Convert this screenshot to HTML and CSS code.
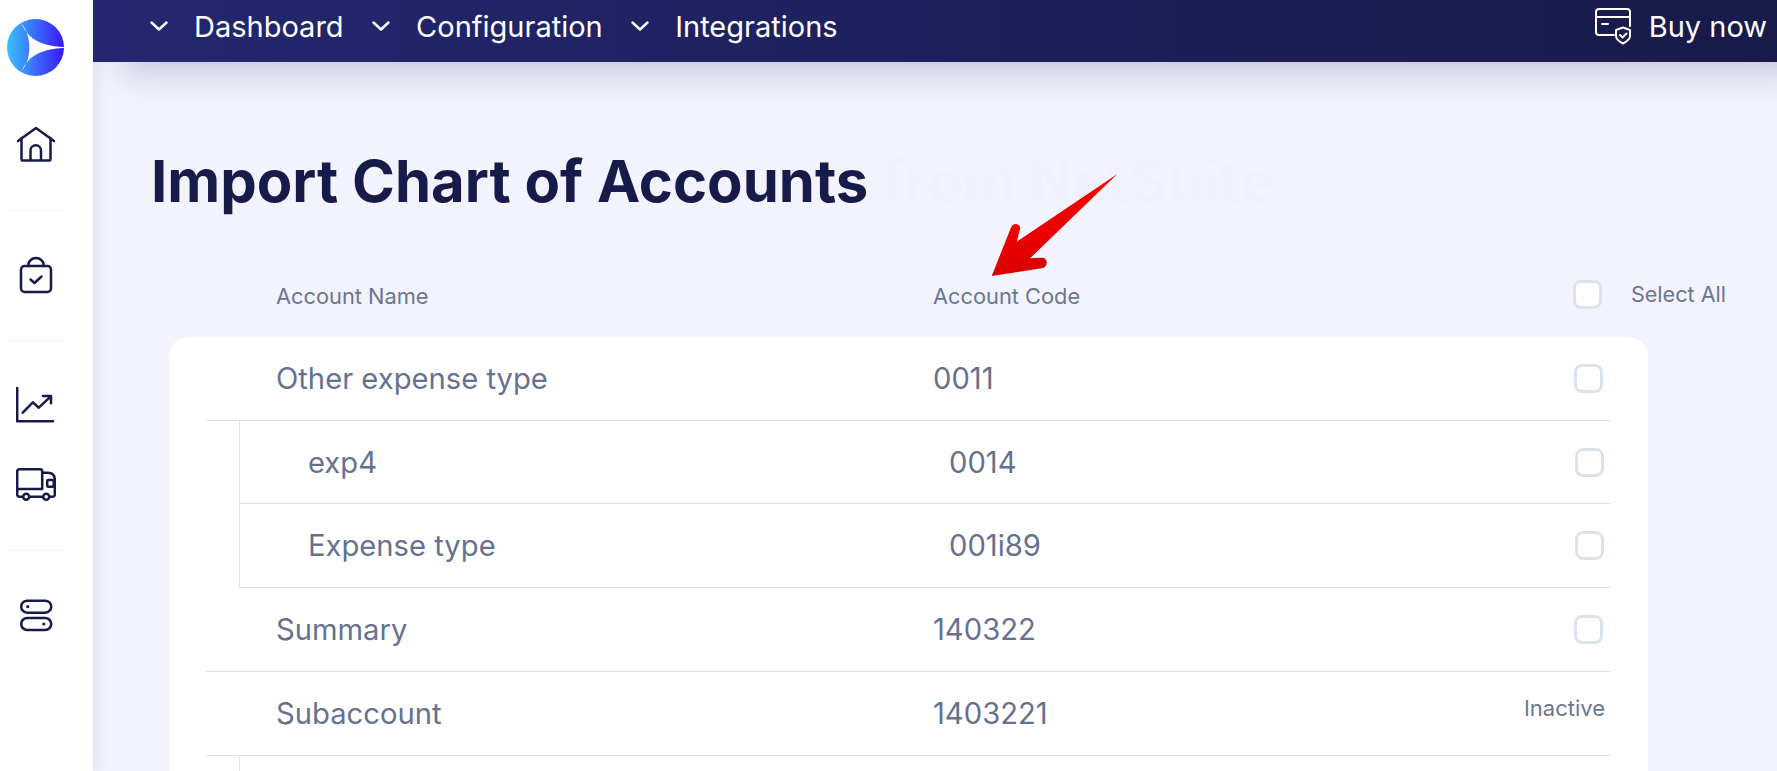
FILE: index.html
```html
<!DOCTYPE html>
<html lang="en">
<head>
  <meta charset="UTF-8">
  <meta name="viewport" content="width=device-width, initial-scale=1.0">
  <title>Import Chart of Accounts</title>
  <link rel="stylesheet" href="styles.css">
</head>
<body>
  <!-- Barra lateral -->
  <aside class="sidebar">
    <div class="logo">
      <svg width="57" height="57" viewBox="0 0 57 57">
        <defs>
          <linearGradient id="logoGrad" x1="0" y1="0" x2="1" y2="0">
            <stop offset="0" stop-color="#3cc0ff"/>
            <stop offset="1" stop-color="#3a17f5"/>
          </linearGradient>
        </defs>
        <circle cx="28.5" cy="28.5" r="28.5" fill="url(#logoGrad)"/>
        <path d="M14.5 4.5C20 17 30 27 57 28V29C30 30 20 40 14.5 52.5C25 40 25 17 14.5 4.5Z" fill="#fff"/>
      </svg>
    </div>
    <div class="side-group">
      <svg class="side-icon" viewBox="0 0 40 40"><path d="M2 16L20 3L38 16M5.5 13V34.5a1 1 0 0 0 1 1H33.5a1 1 0 0 0 1-1V13M14.5 35.5V25.5a5.2 5.2 0 0 1 10.5 0V35.5"/></svg>
    </div>
    <div class="side-group side-group-alt">
      <svg class="side-icon" viewBox="0 0 40 40"><rect x="5" y="10" width="30" height="26" rx="3.5"/><path d="M12.5 10V8.5a7 6 0 0 1 15 0V10M14.5 23.5l4 3.5l7-6.5"/></svg>
    </div>
    <div class="side-group">
      <svg class="side-icon" viewBox="0 0 40 40"><path d="M1.2 3V36.3H37M6.8 27.7L16.8 17.3L22.8 22.7L34.5 11.7M27 11H35V18.3"/></svg>
      <svg class="side-icon side-icon-next" viewBox="0 0 40 40"><path d="M7 31.7H3.2a2 2 0 0 1-2-2V6.3a2 2 0 0 1 2-2H24.2a2 2 0 0 1 2 2V24H1.2M13.4 31.7H27M33.4 31.7H36.8a2 2 0 0 0 2-2V15C38.8 10 36 7.7 32 7.7H26.2"/><rect x="31.2" y="15" width="6.5" height="6.7" rx="1"/><circle cx="10.2" cy="31.7" r="3"/><circle cx="30.2" cy="31.7" r="3"/></svg>
    </div>
    <div class="side-group side-group-last">
      <svg class="side-icon" viewBox="0 0 40 40"><rect x="5.2" y="4.7" width="30" height="12" rx="6"/><rect x="5.2" y="22" width="30" height="12" rx="6"/><circle class="side-dot" cx="11.8" cy="10.7" r="1.6"/><circle class="side-dot" cx="27.8" cy="28" r="1.6"/></svg>
    </div>
  </aside>

  <main class="main">
    <!-- Barra superior -->
    <header class="topbar">
      <nav class="nav">
        <a class="nav-item"><svg class="chevron" viewBox="0 0 18 10"><path d="M1.5 1.5L9 8.5L16.5 1.5"/></svg>Dashboard</a>
        <a class="nav-item"><svg class="chevron" viewBox="0 0 18 10"><path d="M1.5 1.5L9 8.5L16.5 1.5"/></svg>Configuration</a>
        <a class="nav-item"><svg class="chevron" viewBox="0 0 18 10"><path d="M1.5 1.5L9 8.5L16.5 1.5"/></svg>Integrations</a>
      </nav>
      <a class="buy">
        <svg class="buy-icon" viewBox="0 0 40 40"><path d="M20 29H5a3 3 0 0 1-3-3V6a3 3 0 0 1 3-3H33a3 3 0 0 1 3 3V20M2 11H36M8 18H14M29 21.5L36 24V30C36 34 32 36 29 37.5C26 36 22 34 22 30V24ZM26 29l2.5 2.5l4-4"/></svg>
        Buy now
      </a>
    </header>

    <div class="content">
      <h1 class="title">Import Chart of Accounts <span class="title-ghost">from NetSuite</span></h1>

      <div class="table-head">
        <span class="col-name">Account Name</span>
        <span class="col-code">Account Code</span>
        <input class="check check-all" type="checkbox">
        <span class="select-all">Select All</span>
      </div>

      <div class="card">
        <div class="row">
          <span class="col-name">Other expense type</span>
          <span class="col-code">0011</span>
          <input class="check" type="checkbox">
        </div>
        <div class="children">
          <div class="row row-child">
            <span class="col-name">exp4</span>
            <span class="col-code">0014</span>
            <input class="check" type="checkbox">
          </div>
          <div class="row row-child">
            <span class="col-name">Expense type</span>
            <span class="col-code">001i89</span>
            <input class="check" type="checkbox">
          </div>
        </div>
        <div class="row">
          <span class="col-name">Summary</span>
          <span class="col-code">140322</span>
          <input class="check" type="checkbox">
        </div>
        <div class="row">
          <span class="col-name">Subaccount</span>
          <span class="col-code">1403221</span>
          <span class="status">Inactive</span>
        </div>
        <div class="children children-open"></div>
      </div>
    </div>

    <!-- Flecha de anotación -->
    <svg class="arrow" width="140" height="110" viewBox="0 0 140 110">
      <defs>
        <linearGradient id="arrowGrad" x1="0.2" y1="0.3" x2="0.5" y2="1">
          <stop offset="0" stop-color="#ff0000"/>
          <stop offset="1" stop-color="#d00000"/>
        </linearGradient>
      </defs>
      <path d="M6.7 106L25.7 58.3C27 54.5 30 53.5 32 54.3C34.5 55.2 35.5 57 35 59L31.7 71.7L132.3 4L45 88.3L56.7 87.7C60 87.7 62 90 61.7 93C61.5 96 59.5 98 56.7 98.3Z" fill="url(#arrowGrad)"/>
    </svg>
  </main>
</body>
</html>
```
FILE: styles.css
```css
/* Estilos generales */
html, body {
  height: 100%;
}
body {
  font-family: Inter, "Liberation Sans", sans-serif;
  background-color: #f3f3fe;
  margin: 0;
  display: flex;
  overflow: hidden;
}

/* Barra lateral */
.sidebar {
  flex: 0 0 93px;
  box-sizing: border-box;
  padding: 19px 29px 0 7px;
  background: white;
  box-shadow: 0 0 18px rgba(24,26,74,0.12);
  position: relative;
  z-index: 1;
}
.logo {
  height: 62px;
}
.side-group {
  display: flex;
  flex-direction: column;
  align-items: center;
  padding: 44px 0 45px;
  border-bottom: 1px solid #f2f2f9;
}
.side-group-alt {
  padding: 45px 0 44px;
}
.side-group-last {
  padding-top: 45px;
  border-bottom: none;
}
.side-icon {
  width: 40px;
  height: 40px;
  fill: none;
  stroke: #171b49;
  stroke-width: 2.5;
  stroke-linecap: round;
  stroke-linejoin: round;
}
.side-icon-next {
  margin-top: 40px;
}
.side-dot {
  fill: #171b49;
  stroke: none;
}

/* Contenido principal */
.main {
  flex: 1;
  position: relative;
  min-width: 0;
}
.topbar {
  height: 62px;
  box-sizing: border-box;
  padding: 0 10px 10px 57px;
  display: flex;
  align-items: center;
  justify-content: space-between;
  background: linear-gradient(90deg, #23276f, #181a4a);
  color: white;
  font-size: 29px;
  box-shadow: 30px 12px 32px rgba(24,26,74,0.2);
  position: relative;
  z-index: 2;
}
.nav {
  display: flex;
  gap: 28.5px;
}
.nav-item {
  display: flex;
  align-items: center;
  gap: 26px;
}
.chevron {
  width: 18px;
  height: 10px;
  fill: none;
  stroke: white;
  stroke-width: 2.4;
  stroke-linecap: round;
  stroke-linejoin: round;
}
.buy {
  display: flex;
  align-items: center;
  gap: 15px;
}
.buy-icon {
  width: 40px;
  height: 40px;
  fill: none;
  stroke: white;
  stroke-width: 2;
  stroke-linecap: round;
  stroke-linejoin: round;
}
.content {
  padding: 84px 51px 0 58px;
}
.title {
  margin: 0;
  font-size: 58px;
  line-height: 70px;
  font-weight: 700;
  color: #171b49;
  white-space: nowrap;
}
.title-ghost {
  color: #f1f1fc;
}

/* Tabla */
.table-head {
  display: flex;
  align-items: center;
  height: 30px;
  margin-top: 65px;
  margin-bottom: 26px;
  padding-left: 125px;
  color: #6b7690;
  font-size: 21.8px;
}
.col-name {
  flex: 0 0 657px;
}
.col-code {
  flex: 1;
}
.check {
  appearance: none;
  flex: 0 0 auto;
  box-sizing: border-box;
  width: 29px;
  height: 29px;
  margin: 0;
  border: 3px solid #dde3ec;
  border-radius: 8px;
  background: white;
}
.check-all {
  margin-top: -4px;
}
.select-all {
  margin-left: 29px;
  margin-top: -5px;
  font-size: 21.6px;
}
.card {
  margin-left: 18px;
  margin-right: 78px;
  padding: 0 37px;
  background: white;
  border-radius: 20px 20px 0 0;
  color: #667190;
  font-size: 29.2px;
}
.row {
  display: flex;
  align-items: center;
  box-sizing: border-box;
  height: 83.72px;
  padding: 0 8px 0 70px;
  border-bottom: 1px solid #dfe3ec;
}
.children {
  margin-left: 33px;
  border-left: 1px solid #dfe3ec;
}
.children-open {
  height: 60px;
}
.row-child {
  padding: 0 7px 0 68px;
}
.row-child .col-name {
  flex-basis: 641px;
}
.status {
  margin-top: -10px;
  margin-right: -2px;
  font-size: 22px;
  color: #6b7690;
}
.arrow {
  position: absolute;
  left: 892px;
  top: 170px;
  z-index: 3;
}
```
